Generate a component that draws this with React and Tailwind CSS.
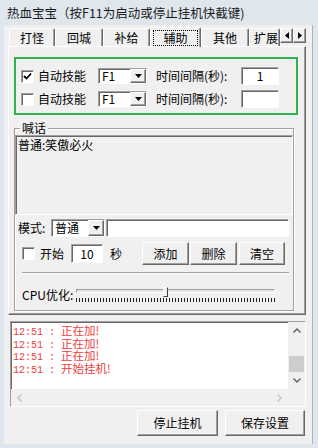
import React from "react";

const raised =
  "border border-t-white border-l-white border-r-[#696969] border-b-[#696969] shadow-[inset_-1px_-1px_0_#a0a0a0]";
const sunken =
  "border border-t-[#a0a0a0] border-l-[#a0a0a0] border-r-white border-b-white shadow-[inset_1px_1px_0_#696969]";

function Check({ checked }) {
  return (
    <span
      className={`w-[13px] h-[13px] shrink-0 bg-white flex items-center justify-center ${sunken}`}
    >
      {checked ? (
        <svg width="9" height="9" viewBox="0 0 9 9">
          <path d="M1 4 L3.5 6.5 L8 1.5" fill="none" stroke="#000" strokeWidth="1.8" />
        </svg>
      ) : null}
    </span>
  );
}

function DownArrow() {
  return (
    <svg width="7" height="4" viewBox="0 0 7 4">
      <path d="M0 0 H7 L3.5 4 Z" fill="#000" />
    </svg>
  );
}

function Combo({ value, className }) {
  return (
    <div className={`bg-white flex items-stretch shrink-0 ${sunken} ${className}`}>
      <span className="flex-1 pl-[3px] leading-[14px] flex items-center">{value}</span>
      <span className={`w-[16px] bg-[#f0f0f0] flex items-center justify-center ${raised}`}>
        <DownArrow />
      </span>
    </div>
  );
}

function Button({ children, className }) {
  return (
    <div
      className={`bg-[#f0f0f0] flex items-center justify-center shrink-0 ${raised} ${className}`}
    >
      {children}
    </div>
  );
}

function Tab({ children, className }) {
  return (
    <div
      className={`h-[18px] shrink-0 flex items-center border-t border-l border-white border-r border-r-[#696969] rounded-t-[2px] shadow-[inset_-1px_0_0_#a0a0a0] ${className}`}
    >
      {children}
    </div>
  );
}

function LogLine({ text }) {
  // tight 12.5px rows like the original list box
  return (
    <div className="h-[12.5px] leading-[12.5px] text-[11.5px] whitespace-pre">
      <span className="font-['Liberation_Mono',monospace] text-[10px]">12:51 : </span>
      {text}
    </div>
  );
}

export default function App() {
  return (
    <div className="w-[318px] h-[448px] overflow-hidden bg-[#dfe6ee] flex flex-col font-['Noto_Sans_CJK_SC',sans-serif] text-[12px] leading-[14px] text-black">
      {/* title bar */}
      <div className="h-[25px] shrink-0 pl-[7px] flex items-center text-[12.5px] text-[#1a1a1a]">
        热血宝宝（按F11为启动或停止挂机快截键)
      </div>

      {/* client area */}
      <div className="ml-[4px] w-[309px] h-[419px] bg-[#f0f0f0] flex flex-col border-r border-r-[#a9b4c0]">
        {/* tabs */}
        <div className="mt-[1px] h-[20px] pl-[5px] flex items-end">
          <Tab className="w-[46px] justify-center">打怪</Tab>
          <Tab className="w-[48px] justify-center">回城</Tab>
          <Tab className="w-[47px] justify-center">补给</Tab>
          <div className="relative z-10 w-[51px] h-[20px] -mb-px shrink-0 bg-[#f0f0f0] flex items-center justify-center border-t border-l border-white border-r border-r-[#696969] rounded-t-[2px] shadow-[inset_-1px_0_0_#a0a0a0]">
            <span className="w-[45px] h-[16px] border border-dotted border-black flex items-center justify-center">
              辅助
            </span>
          </div>
          <Tab className="w-[48px] justify-center">其他</Tab>
          <Tab className="w-[31px] pl-[4px] overflow-hidden whitespace-nowrap">扩展</Tab>
          <div className="self-start mt-[2px] flex">
            <Button className="w-[13px] h-[15px]">
              <svg width="4" height="7" viewBox="0 0 4 7">
                <path d="M4 0 V7 L0 3.5 Z" fill="#000" />
              </svg>
            </Button>
            <Button className="w-[13px] h-[15px]">
              <svg width="4" height="7" viewBox="0 0 4 7">
                <path d="M0 0 V7 L4 3.5 Z" fill="#000" />
              </svg>
            </Button>
          </div>
        </div>

        {/* tab panel */}
        <div className="ml-[4px] w-[298px] h-[269px] shrink-0 flex flex-col border border-t-white border-l-white border-r-[#696969] border-b-[#696969] shadow-[inset_-1px_-1px_0_#a0a0a0]">
          {/* skill box (green highlight) */}
          <div className="mt-[10px] ml-[5px] w-[284px] h-[58px] border-2 border-[#2fb14b] pt-[7px] flex flex-col gap-[3px]">
            {[
              { checked: true, gap: "1" },
              { checked: false, gap: "" },
            ].map((row, i) => (
              <div key={i} className="h-[20px] flex items-center">
                <span className="ml-[5px]">
                  <Check checked={row.checked} />
                </span>
                <span className="ml-[4px] w-[48px]">自动技能</span>
                <Combo value="F1" className="ml-[12px] w-[49px] h-[16px]" />
                <span className="ml-[9px] w-[78px] whitespace-nowrap">时间间隔(秒):</span>
                <div
                  className={`ml-[7px] w-[38px] h-[18px] bg-white flex items-center justify-center ${sunken}`}
                >
                  {row.gap}
                </div>
              </div>
            ))}
          </div>

          {/* shout group */}
          <fieldset className="mt-[6px] ml-[5px] w-[280px] border border-[#a0a0a0] shadow-[inset_1px_1px_0_#fff,1px_1px_0_#fff] pb-[5px]">
            <legend className="ml-[5px] px-[2px] h-[14px] leading-[14px] bg-[#f0f0f0]">喊话</legend>
            <div className={`h-[80px] pl-[2px] pt-[2px] ${sunken}`}>普通:笑傲必火</div>

            <div className="mt-[4px] h-[18px] flex items-center">
              <span className="ml-[3px] w-[33px]">模式:</span>
              <Combo value="普通" className="w-[54px] h-[18px]" />
              <div className={`ml-[1px] w-[183px] h-[18px] bg-white ${sunken}`} />
            </div>

            <div className="mt-[5px] h-[23px] flex items-center">
              <span className="ml-[7px]">
                <Check checked={false} />
              </span>
              <span className="ml-[5px] w-[24px]">开始</span>
              <div
                className={`ml-[7px] w-[32px] h-[19px] bg-white flex items-center justify-center ${sunken}`}
              >
                10
              </div>
              <span className="ml-[7px] w-[12px]">秒</span>
              <Button className="ml-[20px] w-[47px] h-[23px]">添加</Button>
              <Button className="ml-[1px] w-[47px] h-[23px]">删除</Button>
              <Button className="ml-[2px] w-[46px] h-[23px]">清空</Button>
            </div>

            <div className="mt-[7px] ml-[7px] w-[267px] border-t border-t-[#a0a0a0] border-b border-b-white" />

            <div className="mt-[11px] h-[20px] flex items-start">
              <span className="ml-[7px] w-[54px] leading-[20px]">CPU优化:</span>
              <div className="relative w-[199px] h-[20px]">
                <div className="mt-[4px] h-[4px] border border-t-[#a0a0a0] border-l-[#a0a0a0] border-r-white border-b-white bg-[#e3e3e3]" />
                <div className="mt-[5px] h-[4px] bg-[repeating-linear-gradient(90deg,#222_0,#222_1px,transparent_1px,transparent_3px)]" />
                <div className="absolute left-[87px] top-[2px] w-[5px] h-[10px] bg-[#f0f0f0] border border-t-white border-l-white border-r-[#404040] border-b-[#404040]" />
              </div>
            </div>
          </fieldset>
        </div>

        {/* log */}
        <div className={`mt-[6px] ml-[6px] w-[296px] h-[86px] bg-white flex flex-col ${sunken}`}>
          <div className="h-[67px] flex">
            <div className="flex-1 pt-[2px] pl-[2px] text-[#ef3b3b]">
              <LogLine text="正在加!" />
              <LogLine text="正在加!" />
              <LogLine text="正在加!" />
              <LogLine text="开始挂机!" />
            </div>
            <div className="w-[17px] bg-[#f0f0f0] flex flex-col">
              <div className="h-[17px] flex items-center justify-center">
                <svg width="8" height="5" viewBox="0 0 8 5">
                  <path d="M0.5 4.5 L4 1 L7.5 4.5" fill="none" stroke="#606060" strokeWidth="1.4" />
                </svg>
              </div>
              <div className="flex-1 flex flex-col justify-end px-[1px]">
                <div className="h-[16px] bg-[#cdcdcd]" />
              </div>
              <div className="h-[17px] flex items-center justify-center">
                <svg width="8" height="5" viewBox="0 0 8 5">
                  <path d="M0.5 0.5 L4 4 L7.5 0.5" fill="none" stroke="#606060" strokeWidth="1.4" />
                </svg>
              </div>
            </div>
          </div>
          <div className="h-[17px] flex bg-[#f0f0f0]">
            <div className="flex-1 flex items-center justify-between px-[6px]">
              <svg width="5" height="8" viewBox="0 0 5 8">
                <path d="M4.5 0.5 L1 4 L4.5 7.5" fill="none" stroke="#c3c3c3" strokeWidth="1.4" />
              </svg>
              <svg width="5" height="8" viewBox="0 0 5 8">
                <path d="M0.5 0.5 L4 4 L0.5 7.5" fill="none" stroke="#c3c3c3" strokeWidth="1.4" />
              </svg>
            </div>
            <div className="w-[17px]" />
          </div>
        </div>

        {/* bottom buttons */}
        <div className="mt-[3px] flex justify-end pr-[7px] gap-[7px]">
          <Button className="w-[81px] h-[26px]">停止挂机</Button>
          <Button className="w-[80px] h-[26px]">保存设置</Button>
        </div>
      </div>
    </div>
  );
}
